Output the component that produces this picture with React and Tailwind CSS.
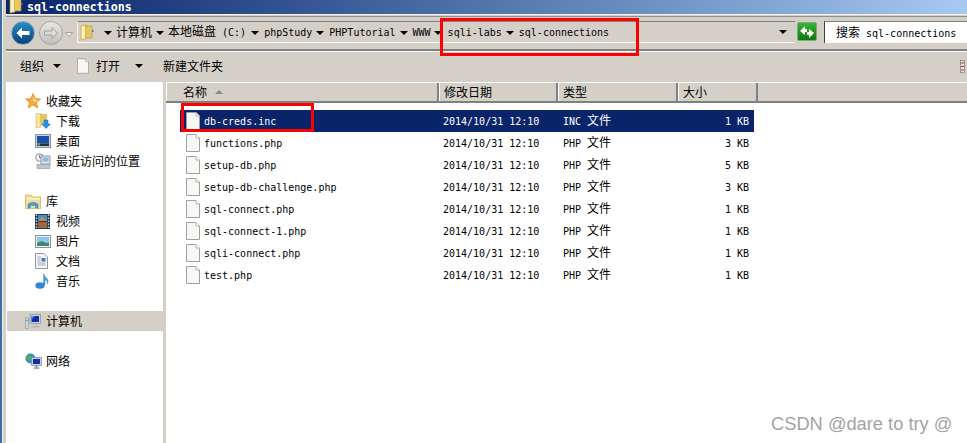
const FILES = [
  { name: 'db-creds.inc', type: 'INC 文件', size: '1 KB', selected: true },
  { name: 'functions.php', type: 'PHP 文件', size: '3 KB' },
  { name: 'setup-db.php', type: 'PHP 文件', size: '5 KB' },
  { name: 'setup-db-challenge.php', type: 'PHP 文件', size: '3 KB' },
  { name: 'sql-connect.php', type: 'PHP 文件', size: '1 KB' },
  { name: 'sql-connect-1.php', type: 'PHP 文件', size: '1 KB' },
  { name: 'sqli-connect.php', type: 'PHP 文件', size: '1 KB' },
  { name: 'test.php', type: 'PHP 文件', size: '1 KB' },
];

// latin runs are 6px wide per char, cjk runs 12px, like SimSun 9pt
function T({ children }) {
  const runs = String(children).match(/[\u4e00-\u9fff]+|[^\u4e00-\u9fff]+/g) || [];
  return (
    <span className="whitespace-pre">
      {runs.map((r, i) =>
        /[\u4e00-\u9fff]/.test(r) ? (
          <span key={i} className="text-[12px] font-['Noto_Sans_CJK_SC',sans-serif]">{r}</span>
        ) : (
          <span key={i} className="text-[10px] font-['DejaVu_Sans_Mono',monospace]">{r}</span>
        )
      )}
    </span>
  );
}

function Caret({ className = '' }) {
  return <span className={`block w-0 h-0 border-x-[4px] border-x-transparent border-t-[4px] border-t-black ${className}`} />;
}

function FolderIcon({ className = '' }) {
  return (
    <svg width="14" height="17" viewBox="0 0 14 17" className={className}>
      <path d="M1 2 L6 0.5 L6 15 L1 16 Z" fill="#f3dc8c" stroke="#c9a94f" strokeWidth="0.6" />
      <path d="M5 2 H12 V14 H5 Z" fill="#e9c65f" stroke="#b79238" strokeWidth="0.6" />
      <path d="M2 3 L5 2.2 V14 L2 14.8 Z" fill="#fff3c4" />
      <rect x="12" y="6" width="1.5" height="2" fill="#3f7fc4" />
    </svg>
  );
}

function FileIcon({ w = 14, h = 18 }) {
  return (
    <svg width={w} height={h} viewBox="0 0 14 18" className="shrink-0">
      <path d="M0.5 0.5 H10 L13.5 4 V17.5 H0.5 Z" fill="#f7f7f5" stroke="#a0a0a0" />
      <path d="M10 0.5 V4 H13.5" fill="#fff" stroke="#b5b5b5" />
    </svg>
  );
}

const ICONS = {
  star: (
    <svg width="16" height="16" viewBox="0 0 16 16">
      <path d="M8 0.5 L10.2 5.6 L15.6 6 L11.4 9.6 L12.8 15 L8 12.1 L3.2 15 L4.6 9.6 L0.4 6 L5.8 5.6 Z" fill="#f7a93a" stroke="#d9862a" strokeWidth="0.7" />
      <path d="M8 3 L9.4 6.6 L12.6 7 L10 9.2 L8 8 Z" fill="#fde28a" />
    </svg>
  ),
  download: (
    <svg width="16" height="16" viewBox="0 0 16 16">
      <path d="M1 1 L6 0 V14 L1 15 Z" fill="#f6e3a0" stroke="#c9a94f" strokeWidth="0.5" />
      <path d="M5 1 H12 V11 H5 Z" fill="#e6c566" />
      <path d="M9 7 H13 V11 H15.5 L11 15.5 L6.5 11 H9 Z" fill="#2f8fdc" stroke="#1a6cb0" strokeWidth="0.5" />
    </svg>
  ),
  desktop: (
    <svg width="16" height="14" viewBox="0 0 16 14">
      <rect x="0.5" y="0.5" width="15" height="13" fill="#c9d3df" stroke="#8a96a5" />
      <rect x="2" y="2" width="12" height="7.5" fill="#1a4fa8" />
      <rect x="2" y="9.5" width="12" height="2.5" fill="#2a3038" />
      <rect x="2.5" y="9" width="2.5" height="2.5" fill="#5fb24a" />
    </svg>
  ),
  recent: (
    <svg width="16" height="16" viewBox="0 0 16 16">
      <circle cx="4.5" cy="4.5" r="3.8" fill="#eef0f0" stroke="#8f9394" />
      <path d="M4.5 2 V4.5 H7" fill="none" stroke="#555" strokeWidth="0.7" />
      <rect x="6" y="3" width="9" height="8" fill="#dfe7ee" stroke="#8f9aa3" />
      <rect x="7.5" y="4.5" width="6" height="4" fill="#8fb7d8" />
      <rect x="2" y="11.5" width="13" height="4" fill="#c4c6c6" stroke="#8f9394" strokeWidth="0.6" />
    </svg>
  ),
  library: (
    <svg width="16" height="15" viewBox="0 0 16 15">
      <path d="M0.5 1 H6 L7 3 H15.5 V14.5 H0.5 Z" fill="#f5dc96" stroke="#c9a94f" strokeWidth="0.7" />
      <rect x="1.5" y="4" width="13" height="1.5" fill="#fff6d4" />
      <path d="M3 14 V10 Q8 6.5 13 10 V14 H10.5 V11.5 H5.5 V14 Z" fill="#4b9bd6" stroke="#2f78b4" strokeWidth="0.4" />
    </svg>
  ),
  video: (
    <svg width="15" height="15" viewBox="0 0 15 15">
      <rect x="0" y="0" width="15" height="15" fill="#1e3a52" />
      <rect x="3" y="1" width="9" height="6" fill="#4c8cbf" />
      <rect x="3" y="8" width="9" height="6" fill="#a2663a" />
      <path d="M3 7 L7 3 L12 7 Z" fill="#c48a5a" />
      {[1, 4, 7, 10, 13].map(y => (
        <g key={y}>
          <rect x="0.8" y={y - 0.5} width="1.4" height="1.4" fill="#d6e4ee" />
          <rect x="12.8" y={y - 0.5} width="1.4" height="1.4" fill="#d6e4ee" />
        </g>
      ))}
    </svg>
  ),
  picture: (
    <svg width="16" height="13" viewBox="0 0 16 13">
      <rect x="0.5" y="0.5" width="15" height="12" fill="#eceef0" stroke="#8d939a" />
      <rect x="2" y="2" width="12" height="9" fill="#8cc6e8" />
      <path d="M2 8 Q6 5 9 7 T14 7 V11 H2 Z" fill="#3f8a6a" />
    </svg>
  ),
  document: (
    <svg width="13" height="16" viewBox="0 0 13 16">
      <path d="M0.5 0.5 H9 L12.5 4 V15.5 H0.5 Z" fill="#f4f6f9" stroke="#8d97a3" />
      <rect x="6.5" y="5" width="4" height="3.5" fill="#3d7cc0" />
      <path d="M2.5 4 H6 M2.5 6 H5.5 M2.5 8 H5.5 M2.5 10 H10.5 M2.5 12 H10.5" stroke="#8d97a3" strokeWidth="0.8" />
    </svg>
  ),
  music: (
    <svg width="14" height="16" viewBox="0 0 14 16">
      <ellipse cx="5" cy="12.5" rx="4.6" ry="3.2" fill="#2f86d4" />
      <path d="M8.6 12 V0.5 Q9.5 4 12.5 6 Q13.8 8 12.4 11 Q12.6 7.5 10 6.5 V12 Z" fill="#4a9be0" stroke="#2a73b8" strokeWidth="0.4" />
    </svg>
  ),
  computer: (
    <svg width="16" height="15" viewBox="0 0 16 15">
      <rect x="0.5" y="4" width="3" height="10.5" fill="#d8dad8" stroke="#8a8c8a" strokeWidth="0.6" />
      <rect x="1.3" y="6" width="1.4" height="1.4" fill="#4caf50" />
      <rect x="5" y="0.5" width="10.5" height="9" fill="#cfd6df" stroke="#9aa3ad" />
      <rect x="6.5" y="2" width="7.5" height="6" fill="#0f2fa8" />
      <path d="M6.5 2 H10 L6.5 6 Z" fill="#3f7fe0" />
      <rect x="8.5" y="10" width="4" height="2" fill="#c3c8ce" />
      <rect x="6.5" y="12" width="8" height="1.5" fill="#b0b5bb" />
    </svg>
  ),
  network: (
    <svg width="17" height="16" viewBox="0 0 17 16">
      <circle cx="5.5" cy="5.5" r="5" fill="#2f8fd8" />
      <path d="M2 3 Q5 1 6 4 Q7 7 4 8 Q1 7 2 3 Z" fill="#52b04c" />
      <rect x="6.5" y="4.5" width="10" height="8" fill="#c9d2dc" stroke="#7f8a96" strokeWidth="0.7" />
      <rect x="8" y="6" width="7" height="5" fill="#0f2fb0" />
      <rect x="10.5" y="12.5" width="2" height="2" fill="#7f8a96" />
      <rect x="8.5" y="14.5" width="6" height="1.2" fill="#7f8a96" />
    </svg>
  ),
};

function NavItem({ icon, label, child, active, className = '' }) {
  return (
    <div className={`h-[20px] flex items-center ${child ? 'pl-[29px]' : 'pl-[19px]'} ${active ? 'bg-[#d4d0c8]' : ''} ${className}`}>
      <span className="w-[21px] flex items-center justify-start">{ICONS[icon]}</span>
      <T>{label}</T>
    </div>
  );
}

function HeaderCell({ label, className = '', children }) {
  return (
    <div className={`h-full flex items-center border-l border-l-white border-r-2 border-r-[#808080] pl-[4px] ${className}`}>
      <T>{label}</T>
      {children}
    </div>
  );
}

export default function App() {
  const crumbs = [
    ['计算机', 'ml-[4px] mr-[4px]'],
    ['本地磁盘 (C:)', 'ml-[4px] mr-[5px]'],
    ['phpStudy', 'ml-[5px] mr-[4px]'],
    ['PHPTutorial', 'ml-[5px] mr-[4px]'],
    ['WWW', 'ml-[5px] mr-[3px]'],
    ['sqli-labs', 'ml-[6px] mr-[4px]'],
    ['sql-connections', 'ml-[5px]'],
  ];

  return (
    <div className="relative w-[967px] h-[443px] overflow-hidden bg-white flex text-black text-[12px] leading-[14px]">
      {/* window frame on the left */}
      <div className="w-[6px] h-full flex shrink-0">
        <div className="w-[2px] bg-[#3a6ea5]" />
        <div className="w-[1px] bg-[#f0eee8]" />
        <div className="w-[3px] bg-[#d4d0c8]" />
      </div>

      <div className="flex-1 min-w-0 flex flex-col">
        {/* title bar */}
        <div className="h-[14px] shrink-0 flex items-center bg-gradient-to-r from-[#0a246a] to-[#a6caf0] pl-[3px]">
          <FolderIcon className="-mt-[3px]" />
          <span className="ml-[4px] text-[11.6px] font-bold text-white font-['DejaVu_Sans_Mono',monospace]">sql-connections</span>
        </div>

        {/* address bar */}
        <div className="h-[37px] shrink-0 flex bg-[#d4d0c8] border-t border-t-[#f4f3ef] border-b-2 border-b-[#808080] pt-[1px]">
          <div className="flex-1 flex items-start border-t border-t-[#909090] pt-[4px]">
            <div className="w-[24px] h-[24px] ml-[5px] rounded-full bg-gradient-to-b from-[#2a8fc8] to-[#0a3f78] border border-[#9ab] flex items-center justify-center shrink-0">
              <svg width="14" height="12" viewBox="0 0 14 12">
                <path d="M6 0.5 L0.5 6 L6 11.5 V8 H13.5 V4 H6 Z" fill="#fff" />
              </svg>
            </div>
            <div className="w-[24px] h-[24px] ml-[4px] rounded-full bg-gradient-to-b from-[#e8e8e6] to-[#c0bfbb] border border-[#a5a5a0] flex items-center justify-center shrink-0">
              <svg width="14" height="12" viewBox="0 0 14 12">
                <path d="M8 0.5 L13.5 6 L8 11.5 V8 H0.5 V4 H8 Z" fill="#dcdcd8" stroke="#a0a09c" />
              </svg>
            </div>
            <svg width="8" height="5" viewBox="0 0 8 5" className="ml-[2px] mt-[11px] shrink-0">
              <path d="M0.5 0.5 H7.5 L4 4.5 Z" fill="#f4f3ef" stroke="#8a8a86" strokeWidth="0.7" />
            </svg>

            {/* breadcrumb field */}
            <div className="ml-[4px] h-[22px] w-[718px] shrink-0 flex items-center border-l border-l-[#f4f3ef] border-b border-b-white border-t border-t-[#808080]">
              <FolderIcon className="ml-[2px] shrink-0" />
              <div className="flex items-center ml-[10px]">
                {crumbs.map(([label, cls]) => (
                  <div key={label} className="flex items-center">
                    <Caret className="mt-[2px]" />
                    <span className={cls}><T>{label}</T></span>
                  </div>
                ))}
              </div>
              <Caret className="ml-auto mr-[8px]" />
            </div>

            {/* refresh */}
            <div className="ml-[2px] mt-[1px] w-[20px] h-[19px] rounded-[2px] bg-gradient-to-b from-[#36b336] to-[#0c7a10] border border-[#7fa87f] flex items-center justify-center shrink-0">
              <svg width="16" height="14" viewBox="0 0 16 14">
                <path d="M1 6 L6 1 V4 H8 V7 H6 V10 Z M15 8 L10 13 V10 H8 V7 H10 V4 Z" fill="#fff" />
              </svg>
            </div>

            {/* search */}
            <div className="ml-[7px] h-[22px] flex-1 bg-white border-t border-l border-t-[#808080] border-l-[#404040] flex items-center pl-[11px] min-w-0 overflow-hidden">
              <T>{'搜索 sql-connections'}</T>
            </div>
          </div>
        </div>

        {/* toolbar */}
        <div className="h-[31px] shrink-0 bg-[#d4d0c8] border-t border-t-white pb-[2px] flex items-center">
          <span className="ml-[14px]"><T>组织</T></span>
          <Caret className="ml-[9px]" />
          <span className="ml-[16px]"><FileIcon w={12} h={16} /></span>
          <span className="ml-[7px]"><T>打开</T></span>
          <Caret className="ml-[15px]" />
          <span className="ml-[20px]"><T>新建文件夹</T></span>
          <svg width="7" height="13" viewBox="0 0 7 13" className="ml-auto">
            <rect x="0.5" y="0.5" width="4" height="12" fill="#e8e6e0" stroke="#777" strokeWidth="0.7" />
            <path d="M1 3 H4 M1 6.5 H4 M1 10 H4" stroke="#b03030" />
          </svg>
        </div>

        <div className="flex-1 min-h-0 flex">
          {/* sidebar */}
          <div className="w-[157px] shrink-0 pt-[8px] border-t border-t-white">
            <NavItem icon="star" label="收藏夹" />
            <NavItem icon="download" label="下载" child />
            <NavItem icon="desktop" label="桌面" child />
            <NavItem icon="recent" label="最近访问的位置" child />
            <NavItem icon="library" label="库" className="mt-[20px]" />
            <NavItem icon="video" label="视频" child />
            <NavItem icon="picture" label="图片" child />
            <NavItem icon="document" label="文档" child />
            <NavItem icon="music" label="音乐" child />
            <NavItem icon="computer" label="计算机" active className="mt-[20px] !ml-[1px] !pl-[18px]" />
            <NavItem icon="network" label="网络" className="mt-[20px]" />
          </div>
          <div className="w-[3px] shrink-0 bg-[#d4d0c8]" />

          {/* file list */}
          <div className="flex-1 min-w-0 flex flex-col">
            <div className="h-[21px] shrink-0 flex bg-[#d4d0c8] border-t border-t-white border-b-2 border-b-[#808080]">
              <HeaderCell label="名称" className="w-[273px] !pl-[16px]">
                <span className="ml-[8px] block w-0 h-0 border-x-[4px] border-x-transparent border-b-[4px] border-b-[#8a8a86]" />
              </HeaderCell>
              <HeaderCell label="修改日期" className="w-[119px]" />
              <HeaderCell label="类型" className="w-[120px]" />
              <HeaderCell label="大小" className="w-[80px]" />
            </div>
            <div className="pt-[7px] pl-[14px]">
              {FILES.map(f => (
                <div key={f.name} className={`w-[574px] h-[22px] flex items-center ${f.selected ? 'bg-[#0a246a] text-white' : ''}`}>
                  <div className="w-[259px] pl-[6px] flex items-center shrink-0">
                    <FileIcon />
                    <span className="ml-[4px]"><T>{f.name}</T></span>
                  </div>
                  <div className="w-[120px] pl-[4px] shrink-0"><T>2014/10/31 12:10</T></div>
                  <div className="w-[120px] pl-[4px] shrink-0"><T>{f.type}</T></div>
                  <div className="flex-1 text-right pr-[5px]"><T>{f.size}</T></div>
                </div>
              ))}
            </div>
          </div>
        </div>
      </div>

      {/* red annotation boxes */}
      <div className="absolute left-[440px] top-[18px] w-[199px] h-[38px] border-[3px] border-[#ff0000]" />
      <div className="absolute left-[181px] top-[103px] w-[133px] h-[29px] border-[3px] border-[#ff0000]" />

      {/* watermark */}
      <div className="absolute left-[771px] top-[413px] text-[18.3px] leading-[22px] text-[#a3a3a3] font-['Liberation_Sans',sans-serif] whitespace-nowrap">CSDN @dare to try @</div>
    </div>
  );
}
